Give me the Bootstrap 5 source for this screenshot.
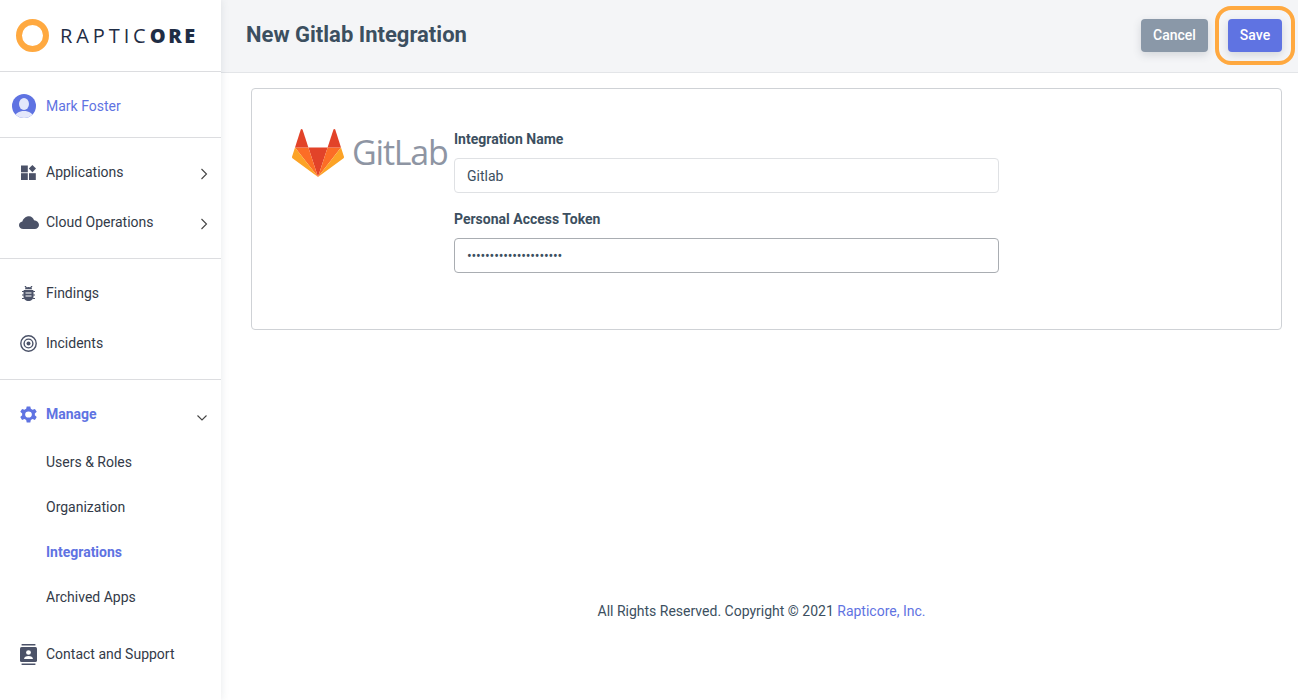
<!DOCTYPE html>
<html lang="en">
<head>
<meta charset="utf-8">
<title>New Gitlab Integration</title>
<link href="https://cdn.jsdelivr.net/npm/bootstrap@5.3.0/dist/css/bootstrap.min.css" rel="stylesheet">
<style>
html,body{height:700px;overflow:hidden}
body{font-family:Roboto,"Liberation Sans",sans-serif;font-size:14px;color:#3c4f60;background:#fff}
.shell{height:700px}
.side{width:221px;flex:none;background:#fff;box-shadow:0 0 8px rgba(60,70,90,.12);position:relative;z-index:2}
.brand{height:72px;border-bottom:1px solid #dcdde0;padding-left:16px;gap:11px}
.ring{width:33px;height:33px;border:6px solid #ffa940;border-radius:50%}
.brandtext{font-family:"Open Sans","Liberation Sans",sans-serif;font-size:20px;letter-spacing:3.9px;color:#1f2d45;font-weight:400;line-height:1}
.brandtext b{font-weight:800;letter-spacing:2.6px}
.usr{height:66px;border-bottom:1px solid #dcdde0;padding:3px 0 0 12px;gap:10px;color:#5f73e2;text-decoration:none}
.sect{border-bottom:1px solid #dcdde0;height:121px;padding-top:9px}
.sect2{padding-top:9px}
.item{height:50px;padding:0 0 0 18px;color:#333a48;gap:0;text-decoration:none;position:relative}
.item .ico{width:22px;display:flex;justify-content:center;margin-right:6px;flex:none;padding-right:1px}
.item .chev{position:absolute;right:13px;top:21px}
.item .chev-down{position:absolute;right:14px;top:26px}
.item.on{color:#5f73e2;font-weight:700}
.sub{height:45px;padding:2px 0 0 46px;color:#333a48;text-decoration:none}
.sub.on{color:#5f73e2;font-weight:700}
.contact{margin-top:10px}
.main{min-width:0}
.topbar{height:73px;background:#f4f5f7;border-bottom:1px solid #e3e5e8;padding:0 16px 1px 25px}
.topbar h1{font-size:22px;font-weight:700;color:#3c4f60;margin:0}
.btn-c,.btn-s{font-size:14px;font-weight:500;color:#fff;border:0;height:33px;border-radius:4px;box-shadow:0 3px 8px rgba(60,70,90,.18);padding:0}
.btn-c{width:67px;background:#8a98a8}
.btn-s{width:54px;background:#5f73e2}
.btn-c:hover{background:#8a98a8;color:#fff}
.btn-s:hover{background:#5f73e2;color:#fff}
.halo{margin-left:7px;padding:9px;border:4px solid #ffa940;border-radius:16px;margin-right:-13px}
.panel{margin:15px 16px 0 30px;height:242px;border:1px solid #cfd2d6;border-radius:4px;padding:39px 0 0 40px}
.glogo{width:162px;flex:none;gap:8px;height:50px}
.gtext{font-family:"Open Sans","Liberation Sans",sans-serif;font-size:34px;color:#8e95a3;line-height:1;letter-spacing:-1.2px;margin-top:-3px}
.formcol{width:545px;margin-top:3px}
.formcol label{font-weight:700;font-size:14px;color:#3c4f60;margin-bottom:11px;line-height:16px;display:block}
.formcol .form-control{height:35px;font-size:14px;color:#3c4f60;border:1px solid #dfe1e4;border-radius:4px;padding:0 12px;box-shadow:none}
.formcol .tok{border-color:#a9adb2;letter-spacing:-.2px}
.fg{margin-bottom:18px}
.foot{margin-top:271px;padding-left:4px;text-align:center;color:#3c4f60;font-size:14px}
.foot a{color:#5f73e2;text-decoration:none}
</style>
</head>
<body>
<div class="d-flex shell">
  <aside class="side d-flex flex-column">
    <div class="brand d-flex align-items-center">
      <span class="ring"></span>
      <span class="brandtext">RAPTIC<b>ORE</b></span>
    </div>
    <a class="usr d-flex align-items-center" href="#">
      <svg width="24" height="24" viewBox="0 0 24 24"><defs><clipPath id="c"><circle cx="12" cy="12" r="12"/></clipPath></defs><circle cx="12" cy="12" r="12" fill="#5f73e2"/><g clip-path="url(#c)" fill="#e4e7fb"><ellipse cx="12" cy="10" rx="5" ry="6"/><path d="M3 24c0-5 4-7 9-7s9 2 9 7z"/></g></svg>
      <span>Mark Foster</span>
    </a>
    <nav class="sect nav flex-column flex-nowrap">
      <a class="item d-flex align-items-center" href="#">
        <span class="ico"><svg width="15" height="15" viewBox="0 0 15 15" fill="#4b5268"><rect x="0" y="0.5" width="6.800" height="6.800"/><rect x="0" y="8.200" width="6.800" height="6.800"/><rect x="8" y="8.200" width="6.800" height="6.800"/><path d="M11.400 0l3.600 3.600-3.600 3.600-3.600-3.600z"/></svg></span>
        <span>Applications</span>
        <svg class="chev" width="8" height="12" viewBox="0 0 8 12" fill="none" stroke="#444" stroke-width="1.100"><path d="M1.500 1l5 5-5 5"/></svg>
      </a>
      <a class="item d-flex align-items-center" href="#">
        <span class="ico"><svg width="20" height="14" viewBox="0 0 21 14" preserveAspectRatio="none" fill="#4b5268"><path d="M4.500 14C2 14 0 12.300 0 10.200 0 8.300 1.500 6.900 3.500 6.600 4.200 4 6 2.400 8.500 1.500 11.800.3 15 2.100 15.800 5.300 18.700 5.500 21 7.400 21 10c0 2.300-2 4-4.500 4z"/></svg></span>
        <span>Cloud Operations</span>
        <svg class="chev" width="8" height="12" viewBox="0 0 8 12" fill="none" stroke="#444" stroke-width="1.100"><path d="M1.500 1l5 5-5 5"/></svg>
      </a>
    </nav>
    <nav class="sect nav flex-column flex-nowrap">
      <a class="item d-flex align-items-center" href="#">
        <span class="ico"><svg width="13" height="15" viewBox="0 0 13 15" fill="#4b5268"><path d="M3 3.200C3 1.800 4.500 1 6.500 1s3.500.8 3.500 2.200z"/><path d="M2.500 4h8c.6 0 1 .4 1 1v5.500c0 2.400-2.200 4.500-5 4.500s-5-2.100-5-4.500V5c0-.6.400-1 1-1z"/><path d="M3 0l1.500 1.800M10 0L8.500 1.800M0 5.500h2M13 5.500h-2M0 9h2M13 9h-2M0 12.500h2M13 12.500h-2" stroke="#4b5268" stroke-width="1.200"/><path d="M3.500 7h6M3.500 10h6" stroke="#fff" stroke-width="1.100"/></svg></span>
        <span>Findings</span>
      </a>
      <a class="item d-flex align-items-center" href="#">
        <span class="ico"><svg width="17" height="17" viewBox="0 0 17 17" fill="none" stroke="#4b5268"><circle cx="8.500" cy="8.500" r="7.700" stroke-width="1.400"/><circle cx="8.500" cy="8.500" r="4.400" stroke-width="1.400"/><circle cx="8.500" cy="8.500" r="2" fill="#4b5268" stroke="none"/></svg></span>
        <span>Incidents</span>
      </a>
    </nav>
    <nav class="sect2 nav flex-column flex-nowrap">
      <a class="item on d-flex align-items-center" href="#">
        <span class="ico"><svg width="17" height="17" viewBox="1.400 1 13.200 14.200" preserveAspectRatio="none" fill="#5f73e2"><path d="M9.400 1H6.600l-.4 2a5.200 5.200 0 0 0-1.300.8L3 3.100 1.600 5.500l1.500 1.400a5 5 0 0 0 0 1.500L1.600 9.800 3 12.200l1.900-.7c.4.300.8.600 1.300.8l.4 2h2.800l.4-2c.5-.2.900-.5 1.300-.8l1.900.7 1.400-2.400-1.500-1.400a5 5 0 0 0 0-1.500l1.500-1.400L13 3.100l-1.900.7a5.200 5.200 0 0 0-1.300-.8zM8 10.300a2.600 2.600 0 1 1 0-5.200 2.600 2.600 0 0 1 0 5.200z" fill-rule="evenodd" transform="translate(0 .4)"/></svg></span>
        <span>Manage</span>
        <svg class="chev-down" width="10" height="6" viewBox="0 0 10 6" fill="none" stroke="#444" stroke-width="1.100"><path d="M.5.500L5 5 9.500.500"/></svg>
      </a>
      <a class="sub d-flex align-items-center" href="#">Users &amp; Roles</a>
      <a class="sub d-flex align-items-center" href="#">Organization</a>
      <a class="sub on d-flex align-items-center" href="#">Integrations</a>
      <a class="sub d-flex align-items-center" href="#">Archived Apps</a>
      <a class="item contact d-flex align-items-center" href="#">
        <span class="ico"><svg width="17" height="21" viewBox="0 0 16 21" preserveAspectRatio="none" fill="#4b5268"><rect x="1.500" y="0" width="13" height="1.500"/><rect x="1.500" y="19.500" width="13" height="1.500"/><rect x="0" y="3" width="16" height="15" rx="1.500"/><circle cx="8" cy="8.500" r="2.300" fill="#fff"/><path d="M3.800 15c0-2 1.800-3 4.200-3s4.200 1 4.200 3z" fill="#fff"/></svg></span>
        <span>Contact and Support</span>
      </a>
    </nav>
  </aside>
  <main class="main flex-grow-1 d-flex flex-column">
    <header class="topbar d-flex align-items-center justify-content-between">
      <h1>New Gitlab Integration</h1>
      <div class="d-flex align-items-center">
        <button type="button" class="btn btn-c">Cancel</button>
        <span class="halo d-flex"><button type="button" class="btn btn-s">Save</button></span>
      </div>
    </header>
    <section class="panel d-flex">
      <div class="glogo d-flex align-items-center">
        <svg width="52" height="48" viewBox="0 0 52 48"><path fill="#e24329" d="M26 48l9.600-29.500H16.400z"/><path fill="#fc6d26" d="M26 48L16.400 18.500H3z"/><path fill="#fca326" d="M3 18.500L.1 27.400c-.3.800 0 1.700.7 2.200L26 48z"/><path fill="#e24329" d="M3 18.500h13.400L10.600.7c-.3-.9-1.600-.9-1.900 0z"/><path fill="#fc6d26" d="M26 48l9.600-29.500H49z"/><path fill="#fca326" d="M49 18.500l2.900 8.900c.3.800 0 1.700-.7 2.200L26 48z"/><path fill="#e24329" d="M49 18.500H35.600L41.400.7c.3-.9 1.600-.9 1.900 0z"/></svg>
        <span class="gtext">GitLab</span>
      </div>
      <form class="formcol">
        <div class="fg">
          <label for="n">Integration Name</label>
          <input id="n" class="form-control" value="Gitlab">
        </div>
        <div>
          <label for="t">Personal Access Token</label>
          <input id="t" class="form-control tok" type="password" value="abcdefghijklmnopqrstu">
        </div>
      </form>
    </section>
    <footer class="foot">All Rights Reserved. Copyright © 2021 <a href="#">Rapticore, Inc.</a></footer>
  </main>
</div>
<script src="https://cdn.jsdelivr.net/npm/bootstrap@5.3.0/dist/js/bootstrap.bundle.min.js"></script>
</body>
</html>
